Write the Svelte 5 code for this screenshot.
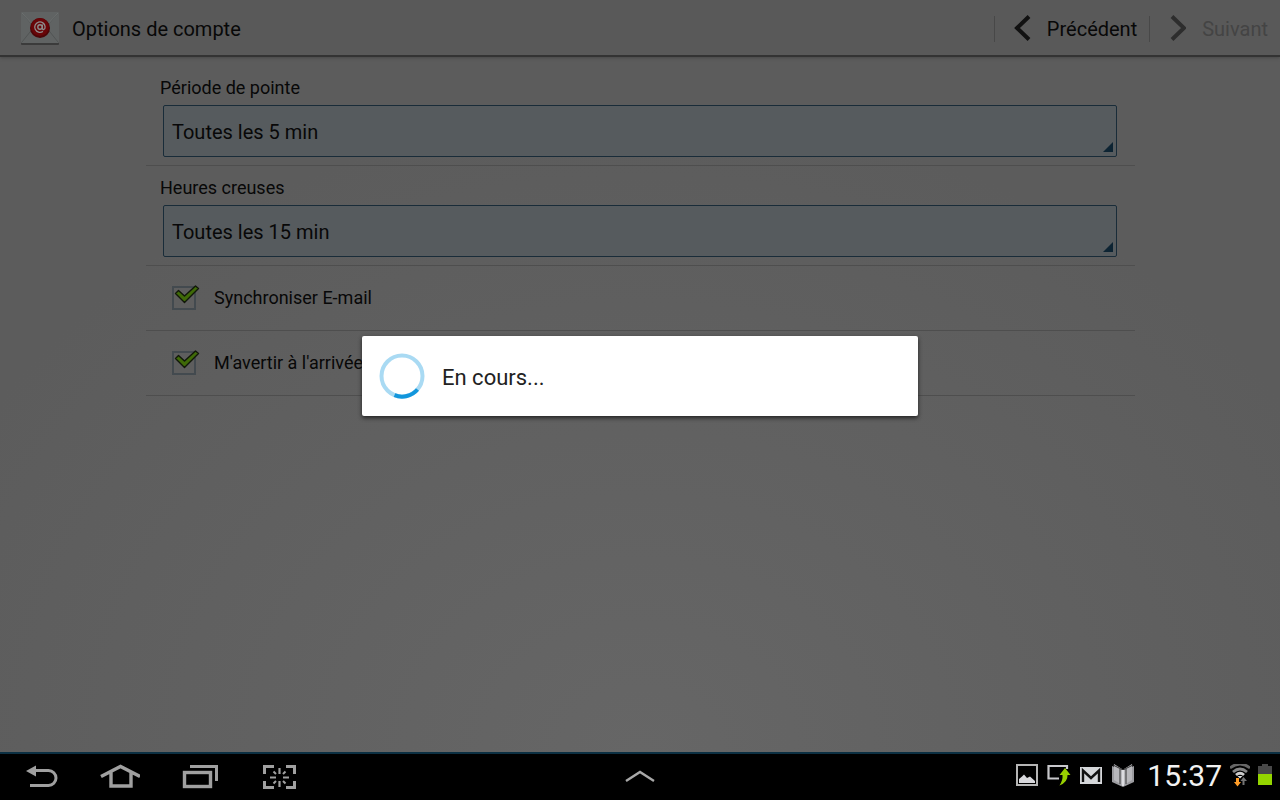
<script lang="ts">
    const intervals = ['Toutes les 5 min', 'Toutes les 15 min']
    let peak = $state(intervals[0])
    let offPeak = $state(intervals[1])
    let sync = $state(true)
    let notify = $state(true)
</script>

<div class="screen">
    <header>
        <svg width="40" height="36" viewBox="0 0 40 36">
            <rect x="1" y="2" width="38" height="32" rx="1" fill="#3b3b3b" />
            <rect x="1" y="1" width="38" height="31" rx="1" fill="#606363" />
            <path d="M2 2L14 16L2 31M38 2L26 16L38 31" fill="none" stroke="#515454" />
            <path d="M2 2L15 16M38 2L25 16" fill="none" stroke="#6d7070" />
            <circle cx="20" cy="17" r="10" fill="#4c0507" />
            <circle cx="20" cy="16" r="9" fill="#690508" />
            <circle cx="20" cy="16" r="2.2" fill="none" stroke="#8d8d8d" stroke-width="1.4" />
            <path d="M22.4 13.4V17q0 1.7 1.4 1.5q1.4-.4 1.3-2.8a5.2 5.2 0 1 0-2.2 4.7" fill="none" stroke="#8d8d8d" stroke-width="1.3" />
        </svg>
        <h1>Options de compte</h1>
        <nav>
            <button type="button" class="previous">
                <svg width="18" height="28" viewBox="0 0 18 28"><path d="M16 1.500L4 13L16 24.500" fill="none" stroke="#111" stroke-width="4" /></svg>
                Précédent
            </button>
            <button type="button" class="next" disabled>
                <svg width="18" height="28" viewBox="0 0 18 28"><path d="M4 1.500L16 13L4 24.500" fill="none" stroke="#2d2d2d" stroke-width="4" /></svg>
                Suivant
            </button>
        </nav>
    </header>

    <main>
        <div class="field">
            <label for="peak">Période de pointe</label>
            <div class="spinner">
                <select id="peak" bind:value={peak}>
                    {#each intervals as interval}
                        <option>{interval}</option>
                    {/each}
                </select>
            </div>
        </div>
        <div class="field">
            <label for="off-peak">Heures creuses</label>
            <div class="spinner">
                <select id="off-peak" bind:value={offPeak}>
                    {#each intervals as interval}
                        <option>{interval}</option>
                    {/each}
                </select>
            </div>
        </div>
        <label class="option">
            <span class="box">
                <input type="checkbox" bind:checked={sync} />
                {#if sync}{@render tick()}{/if}
            </span>
            <span class="text">Synchroniser E-mail</span>
        </label>
        <label class="option">
            <span class="box">
                <input type="checkbox" bind:checked={notify} />
                {#if notify}{@render tick()}{/if}
            </span>
            <span class="text">M'avertir à l'arrivée</span>
        </label>
    </main>

    <footer>
        <div class="keys">
            <button type="button" aria-label="Retour">
                <svg width="40" height="32" viewBox="0 0 40 32">
                    <path d="M13 8.5H28.5a7 7 0 0 1 0 15H10" fill="none" stroke="#a0a0a0" stroke-width="3" />
                    <path d="M6 9L16 3.5V14.5Z" fill="#a0a0a0" />
                </svg>
            </button>
            <button type="button" aria-label="Accueil">
                <svg width="40" height="32" viewBox="0 0 40 32">
                    <path d="M1 14.5L20.500 4.500L40 14.500M11 10V24H31V10" fill="none" stroke="#a0a0a0" stroke-width="3.4" />
                </svg>
            </button>
            <button type="button" aria-label="Applications récentes">
                <svg width="40" height="32" viewBox="0 0 40 32">
                    <rect x="4.5" y="10.500" width="26" height="14" fill="none" stroke="#a0a0a0" stroke-width="3.400" />
                    <path d="M10 4.500H36.5V19" fill="none" stroke="#a0a0a0" stroke-width="3" />
                </svg>
            </button>
            <button type="button" aria-label="Capture d'écran">
                <svg width="40" height="32" viewBox="0 0 40 32">
                    <g fill="none" stroke="#a0a0a0">
                        <path d="M4.500 12V4.500H14M26 4.500H34.500V12M34.500 19V25.500H26M14 25.500H4.500V19" stroke-width="3" />
                        <path d="M19.500 6V12M19.500 19V25M10 15.500H16M23 15.500H29" stroke-width="2.200" />
                        <path d="M13.500 9.500L16 12M25.500 9.500L23 12M13.500 21.500L16 19M25.500 21.500L23 19" stroke-width="2" />
                    </g>
                </svg>
            </button>
        </div>
        <button type="button" aria-label="Mini-applications">
            <svg width="32" height="16" viewBox="0 0 32 16"><path d="M2 12L16 3L30 12" fill="none" stroke="#a8a8a8" stroke-width="2.400" /></svg>
        </button>
        <div class="status">
            <svg width="24" height="24" viewBox="0 0 24 24">
                <rect x="2" y="1" width="20" height="20" fill="none" stroke="#b5b5b5" stroke-width="2" />
                <path d="M4 19V15L7 12.500L9 10.500L12 14L15 12.500L20 17V19Z" fill="#d8d8dc" />
            </svg>
            <svg width="24" height="24" viewBox="0 0 24 24">
                <path d="M20 5V2H1.500V14.500H12" fill="none" stroke="#c8c8cc" stroke-width="2.200" />
                <path d="M18 4L23.500 11H20.500Q21 18 12.500 21.500Q16 16 15.500 11H12.500Z" fill="#98d000" />
            </svg>
            <svg width="24" height="24" viewBox="0 0 24 24">
                <rect x="1" y="3" width="22" height="17" fill="#d5d7da" />
                <path d="M4 18V6.500L12 14L20 6.500V18" fill="none" stroke="#111" stroke-width="2.400" />
            </svg>
            <svg width="24" height="24" viewBox="0 0 24 24">
                <path d="M1 2L12 6L23 2V18L12 23L1 18Z" fill="#9c9ca0" />
                <path d="M3 0L11 5V21L3 16ZM21 0L13 5V21L21 16Z" fill="#b8b8bc" />
                <path d="M2 1L12 6L22 1M9 5V20M15 5V20" fill="none" stroke="#333" stroke-width="1" />
                <path d="M12 6V22" stroke="#dcdce0" stroke-width="2" />
            </svg>
            <time>15:37</time>
            <svg width="20" height="24" viewBox="0 0 20 24">
                <g fill="none" stroke-width="2.800">
                    <path d="M0 4Q10-4 20 4" stroke="#666" />
                    <path d="M3 8Q10 2 17 8" stroke="#858585" />
                    <path d="M6 11Q10 7.500 14 11" stroke="#ccc" />
                </g>
                <path d="M7.500 12H12.500L10 14.500Z" fill="#ddd" />
                <path d="M6 14H9V18H11L7.500 22.500L4 18H6Z" fill="#ff9d28" />
                <path d="M12.500 21V17H10.500L13.500 13L17 17H14.500V21Z" fill="#747474" />
            </svg>
            <svg width="14" height="24" viewBox="0 0 14 24">
                <path d="M0 2H4V0H10V2H14V10H0Z" fill="#484848" />
                <rect y="10" width="14" height="11" fill="#94d500" />
            </svg>
        </div>
    </footer>

    <div class="dialog" role="dialog" aria-labelledby="progress">
        <svg width="46" height="46" viewBox="0 0 46 46">
            <circle cx="23" cy="23" r="20.500" fill="none" stroke="#a9daf3" stroke-width="4" />
            <path d="M38.500 36.500A20.500 20.500 0 0 1 15.500 42.200" fill="none" stroke="#1296dc" stroke-width="4" />
        </svg>
        <p id="progress">En cours...</p>
    </div>
</div>

{#snippet tick()}
    <svg width="28" height="24" viewBox="0 0 28 24">
        <path d="M2.500 9.500L5.500 6.500L11.500 12L22.500 2L25.500 4.500L11.500 18.500Z" fill="#3f6a08" stroke="#11170a" stroke-width="1.400" stroke-linejoin="round" />
    </svg>
{/snippet}

<style>
    :global(body) {
        margin: 0;
        background: #000;
    }
    .screen {
        position: relative;
        display: flex;
        flex-direction: column;
        min-height: 100vh;
        font-family: Roboto, "Liberation Sans", sans-serif;
        color: #080808;
        background: radial-gradient(ellipse 60% 80% at 50% 94%, #666, #5c5c5c);
    }
    svg {
        display: block;
        flex: none;
    }
    button {
        display: flex;
        align-items: center;
        padding: 0;
        border: none;
        background: none;
        color: inherit;
        font: inherit;
    }
    header {
        display: flex;
        align-items: center;
        box-sizing: border-box;
        height: 57px;
        padding: 2px 0 0 20px;
        background: #595959;
        border-bottom: 2px solid #333;
        box-shadow: 0 1px 3px #484848;
    }
    h1 {
        flex: 1;
        margin: 0 0 0 12px;
        font-size: 20px;
        font-weight: 400;
        line-height: 24px;
    }
    nav {
        display: flex;
    }
    nav button {
        height: 26px;
        padding: 0 12px 0 18px;
        gap: 16px;
        border-left: 1px solid #484848;
        font-size: 20px;
    }
    nav .next {
        color: #444;
    }
    main {
        flex: 1;
        padding: 9px 145px 0 146px;
    }
    .field {
        display: flex;
        flex-direction: column;
        padding: 10px 18px 8px 14px;
        border-bottom: 1px solid #4e4e4e;
    }
    .field label {
        font-size: 18px;
        line-height: 24px;
    }
    .spinner {
        position: relative;
        margin: 5px 0 0 3px;
    }
    .spinner::after {
        content: '';
        position: absolute;
        right: 4px;
        bottom: 5px;
        width: 10px;
        height: 10px;
        background: #0d2433;
        clip-path: polygon(100% 0, 100% 100%, 0 100%);
        pointer-events: none;
    }
    select {
        display: block;
        box-sizing: border-box;
        width: 100%;
        height: 52px;
        padding: 2px 8px 0;
        appearance: none;
        border: 1px solid #192c39;
        border-radius: 2px;
        background: #565b5e;
        color: inherit;
        font: inherit;
        font-size: 20px;
    }
    .option {
        display: flex;
        align-items: center;
        height: 64px;
        padding-left: 26px;
        gap: 18px;
        border-bottom: 1px solid #4e4e4e;
        font-size: 18px;
    }
    .option .text {
        padding-bottom: 2px;
    }
    .box {
        position: relative;
        width: 24px;
        height: 24px;
    }
    .box input {
        display: block;
        width: 24px;
        height: 24px;
        margin: 0;
        appearance: none;
        border: 2px solid #434a4f;
        background: #5e5e5e;
    }
    .box svg {
        position: absolute;
        left: 1px;
        top: -2px;
        pointer-events: none;
    }
    footer {
        display: grid;
        grid-template-columns: 1fr auto 1fr;
        align-items: center;
        height: 46px;
        border-top: 2px solid #0c3043;
        background: #000;
    }
    .keys {
        display: flex;
        gap: 40px;
        padding: 2px 0 0 20px;
    }
    .status {
        display: flex;
        align-items: center;
        justify-content: flex-end;
        gap: 8px;
        padding: 0 8px 2px 0;
    }
    time {
        margin-left: 4px;
        color: #f2f2f2;
        font-size: 30px;
        line-height: 36px;
    }
    .dialog {
        position: absolute;
        top: 336px;
        left: 50%;
        display: flex;
        align-items: center;
        box-sizing: border-box;
        width: 556px;
        height: 80px;
        margin-left: -278px;
        padding: 0 17px;
        gap: 17px;
        border-radius: 2px;
        background: #fff;
        box-shadow: 0 2px 4px #222;
    }
    .dialog p {
        margin: 0;
        padding-top: 4px;
        color: #222;
        font-size: 22px;
        line-height: 28px;
    }
</style>
